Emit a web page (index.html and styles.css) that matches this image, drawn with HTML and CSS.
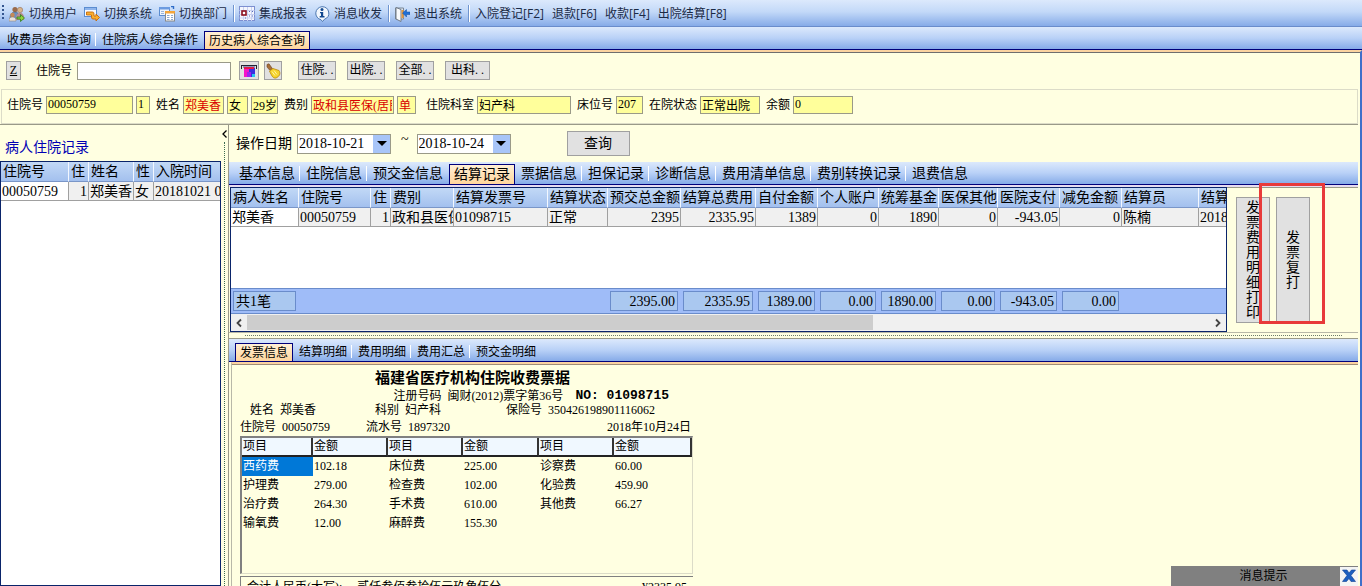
FILE: index.html
```html
<!DOCTYPE html>
<html lang="zh-CN">
<head>
<meta charset="UTF-8">
<meta name="viewport" content="width=device-width, initial-scale=1.0">
<title>历史病人综合查询</title>
<link rel="stylesheet" href="styles.css">
</head>
<body>
<div class="app">

    <!-- 工具栏 -->
    <div class="toolbar">
        <span class="grip"></span>
        <button class="tool">
            <svg viewBox="0 0 16 16"><circle cx="6" cy="3.5" r="2.6" fill="#9a6a4a"/><path d="M1 12c0-4 2-6 5-6s4 2 4 5v2H1z" fill="#6b8fc0" stroke="#456" stroke-width=".5"/><circle cx="11" cy="4" r="2.7" fill="#d8b48c" stroke="#865" stroke-width=".5"/><path d="M7 14c0-5 1-7 4-7s4 2 4 5v2z" fill="#b98b93"/><circle cx="3.5" cy="9" r="2.2" fill="#c58a58"/><path d="M0 15c0-3 1-4 3.500-4S7 12 7 15z" fill="#e9e2dc" stroke="#876" stroke-width=".5"/><path d="M8 11h3.500V8.500l4 3.500-4 3.500V13H8z" fill="#8fd43c" stroke="#2f7d1c" stroke-width=".8"/></svg>
            切换用户
        </button>
        <button class="tool">
            <svg viewBox="0 0 16 16"><rect x=".5" y="1.500" width="12" height="9" fill="#f7fafe" stroke="#5b8cd0"/><path d="M1 2h11v2H1z" fill="#8fb5ec"/><path d="M2.500 6h6c1.500 0 1.500 1 1.500 4h2V8l3.500 3.500L12 15v-2H9c-1.500 0-1.500-1-1.500-4h-5z" fill="#f9ae2e" stroke="#c46a0a" stroke-width=".9"/></svg>
            切换系统
        </button>
        <button class="tool">
            <svg viewBox="0 0 16 16"><rect x=".5" y="1.500" width="10" height="8" fill="#eef4fc" stroke="#5b8cd0"/><path d="M0 1h11v2.500H0z" fill="#6c9be0"/><path d="M2 5.500h3M2 7.500h3" stroke="#9ab4da"/><rect x="6.500" y="5.500" width="9" height="9.500" fill="#fff" stroke="#8a8a8a"/><path d="M6 5h10v2.500H6z" fill="#f4a53a"/><path d="M8 9.500h2.500M12 9.500h2M8 11.500h2.500M12 11.500h2M8 13.500h2.500M12 13.500h2" stroke="#8fa9cf"/><path d="M12 .5h2.500V3" fill="none" stroke="#2f6cc8" stroke-width="1.400"/></svg>
            切换部门
        </button>
        <span class="sep"></span>
        <button class="tool">
            <svg viewBox="0 0 16 16"><rect x=".5" y=".5" width="15" height="14" fill="#f4f6fd" stroke="#7d8fd0"/><path d="M.5 4.500h15M.5 8.500h15M.5 12h15M4.500 1v14M8.500 1v14M12.500 1v14" stroke="#c9d1f0"/><rect x="3" y="5" width="4" height="4" fill="#fff" stroke="#8c1020" stroke-width="1.600"/><path d="M10 5.500h1M13 5.500h1M10 10h1M13 10h1M6 12h1" stroke="#556bb8"/></svg>
            集成报表
        </button>
        <button class="tool">
            <svg viewBox="0 0 16 16"><path d="M8 .7a7 6.500 0 0 1 2.500 12.500L8.500 15.500 7 13.700A6.800 6.600 0 0 1 8 .7z" fill="#f2f7fd" stroke="#4c77b0"/><circle cx="8" cy="3.600" r="1.500" fill="#12488f"/><path d="M6 6h3.200v4h1.300v1.500H5.700V10H7V7.300H6z" fill="#12488f"/></svg>
            消息收发
        </button>
        <span class="sep"></span>
        <button class="tool">
            <svg viewBox="0 0 16 16"><path d="M1.500 2h8v11h-8z" fill="#dfe7f0" stroke="#7b8694"/><path d="M2 1.500l5 2v12l-5-2.500z" fill="#f8fafc" stroke="#6f7a88"/><path d="M7.500 4h2v8h-2z" fill="#e89a3c"/><path d="M8.500 7l4-3.500V6H16v2.500h-3.500V11z" fill="#1f6fd6" stroke="#1450a0" stroke-width=".5"/></svg>
            退出系统
        </button>
        <span class="sep"></span>
        <button class="tool text-only">入院登记[F2]</button>
        <button class="tool text-only">退款[F6]</button>
        <button class="tool text-only">收款[F4]</button>
        <button class="tool text-only">出院结算[F8]</button>
    </div>

    <div class="tabs tabs-main">
        <button class="tab">收费员综合查询</button>
        <button class="tab">住院病人综合操作</button>
        <button class="tab active">历史病人综合查询</button>
    </div>

    <div class="page">
        <!-- 查找病人 -->
        <div class="search">
            <button class="btn btn-z"><u>Z</u></button>
            <label for="findNo">住院号</label>
            <input type="text" id="findNo" class="find-no">
            <button class="btn btn-icon" aria-label="读卡">
                <svg viewBox="0 0 18 16"><path d="M1.500 2v4M16.500 2v4" stroke="#222"/><path d="M3 3h12v2H3z" fill="#8d96b8"/><path d="M1 2.500h16" stroke="#223"/><path d="M4 5h5v9H4z" fill="#f414c8"/><path d="M9 5h6v9H9z" fill="#3a2fe0"/><path d="M4 4h10v2H4z" fill="#e01848"/><path d="M7 9h4v5H7z" fill="#a020f0"/><path d="M12 11h3v3h-3z" fill="#27c4f0"/></svg>
            </button>
            <button class="btn btn-icon btn-clear" aria-label="清空">
                <svg viewBox="0 0 16 16"><path d="M2 1.500L4 .8l3.500 5L5 7.500 2 4z" fill="#a8703a" stroke="#6d4420" stroke-width=".6"/><path d="M4.500 8l3.500-2.500 6 2c2 3 .5 6-3 7.500-3 .5-4-1.500-6.500-7z" fill="#f6d42c" stroke="#b8860b" stroke-width=".8"/><path d="M7 8.500l3 4M9 7.500l3 4" stroke="#fff3a0"/></svg>
            </button>
            <button class="btn btn-find">住院. .</button>
            <button class="btn btn-find">出院. .</button>
            <button class="btn btn-find">全部. .</button>
            <button class="btn btn-find wide">出科. .</button>
        </div>

        <!-- 病人资料 -->
        <div class="patient">
            <label for="pNo">住院号</label>
            <input type="text" id="pNo" class="w-no" value="00050759" readonly>
            <input type="text" class="w-times" value="1" aria-label="住院次数" readonly>
            <label for="pName">姓名</label>
            <input type="text" id="pName" class="w-name red" value="郑美香" readonly>
            <input type="text" class="w-sex" value="女" aria-label="性别" readonly>
            <input type="text" class="w-age" value="29岁" aria-label="年龄" readonly>
            <label for="pType">费别</label>
            <input type="text" id="pType" class="w-type red" value="政和县医保(居民)" readonly>
            <input type="text" class="w-mark red" value="单" aria-label="标记" readonly>
            <label for="pDept" class="l-dept">住院科室</label>
            <input type="text" id="pDept" class="w-dept" value="妇产科" readonly>
            <label for="pBed">床位号</label>
            <input type="text" id="pBed" class="w-age" value="207" readonly>
            <label for="pState">在院状态</label>
            <input type="text" id="pState" class="w-state" value="正常出院" readonly>
            <label for="pLeft">余额</label>
            <input type="text" id="pLeft" class="w-state" value="0" readonly>
        </div>

        <div class="main">
            <div class="left">
                <h2>病人住院记录</h2>
                <div class="left-grid">
                    <table class="grid">
                        <colgroup><col class="c-68"><col class="c-20"><col class="c-45"><col class="c-20"><col class="c-77"></colgroup>
                        <thead>
                            <tr><th>住院号</th><th>住</th><th>姓名</th><th>性</th><th>入院时间</th></tr>
                        </thead>
                        <tbody>
                            <tr><td>00050759</td><td class="num">1</td><td>郑美香</td><td>女</td><td>20181021 08</td></tr>
                        </tbody>
                    </table>
                </div>
            </div>

            <div class="splitter">
                <svg viewBox="0 0 5 8"><path d="M4.500 .5L1 4l3.500 3.500" fill="none" stroke="#000" stroke-width="1.300"/></svg>
                <span class="dots"></span>
            </div>

            <div class="right">
                <div class="filter">
                    <label for="dateFrom">操作日期</label>
                    <span class="date">
                        <input type="text" id="dateFrom" value="2018-10-21">
                        <button aria-label="选择开始日期"></button>
                    </span>
                    <span class="tilde">~</span>
                    <span class="date">
                        <input type="text" value="2018-10-24" aria-label="结束日期">
                        <button aria-label="选择结束日期"></button>
                    </span>
                    <button class="btn btn-query">查询</button>
                </div>

                <div class="tabs tabs-info">
                    <button class="tab">基本信息</button>
                    <button class="tab">住院信息</button>
                    <button class="tab">预交金信息</button>
                    <button class="tab active">结算记录</button>
                    <button class="tab">票据信息</button>
                    <button class="tab">担保记录</button>
                    <button class="tab">诊断信息</button>
                    <button class="tab">费用清单信息</button>
                    <button class="tab">费别转换记录</button>
                    <button class="tab">退费信息</button>
                </div>

                <div class="settle">
                    <div class="settle-grid">
                        <div class="settle-rows">
                            <table class="grid">
                                <colgroup>
                                    <col class="c-68"><col class="c-72"><col class="c-20"><col class="c-63">
                                    <col class="c-94"><col class="c-60"><col class="c-73"><col class="c-75">
                                    <col class="c-62"><col class="c-61"><col class="c-60"><col class="c-59">
                                    <col class="c-62"><col class="c-62"><col class="c-77"><col class="c-94">
                                </colgroup>
                                <thead>
                                    <tr><th>病人姓名</th><th>住院号</th><th>住</th><th>费别</th><th>结算发票号</th><th>结算状态</th><th>预交总金额</th><th>结算总费用</th><th>自付金额</th><th>个人账户</th><th>统筹基金</th><th>医保其他</th><th>医院支付</th><th>减免金额</th><th>结算员</th><th>结算时间</th></tr>
                                </thead>
                                <tbody>
                                    <tr><td>郑美香</td><td>00050759</td><td class="num">1</td><td>政和县医保</td><td>01098715</td><td>正常</td><td class="num">2395</td><td class="num">2335.95</td><td class="num">1389</td><td class="num">0</td><td class="num">1890</td><td class="num">0</td><td class="num">-943.05</td><td class="num">0</td><td>陈楠</td><td>2018-10-24</td></tr>
                                    <tr class="blank"><td colspan="16"></td></tr>
                                </tbody>
                                <tfoot>
                                    <tr><td><span class="left-sum">共1笔</span></td><td colspan="5"></td><td><span>2395.00</span></td><td><span>2335.95</span></td><td><span>1389.00</span></td><td><span>0.00</span></td><td><span>1890.00</span></td><td><span>0.00</span></td><td><span>-943.05</span></td><td><span>0.00</span></td><td colspan="2"></td></tr>
                                </tfoot>
                            </table>
                        </div>
                        <div class="hscroll">
                            <svg viewBox="0 0 8 10"><path d="M6 1.500L2.500 5 6 8.500" fill="none" stroke="#444" stroke-width="1.800"/></svg>
                            <div class="track"><div class="thumb"></div></div>
                            <svg viewBox="0 0 8 10"><path d="M2 1.500L5.500 5 2 8.500" fill="none" stroke="#444" stroke-width="1.800"/></svg>
                        </div>
                    </div>
                    <div class="settle-side">
                        <button class="btn btn-tall"><span>发票费用明细打印</span></button>
                        <button class="btn btn-tall"><span>发票复打</span></button>
                        <div class="mark"></div>
                    </div>
                </div>

                <div class="hsplit"></div>

                <div class="tabs tabs-detail">
                    <button class="tab active">发票信息</button>
                    <button class="tab">结算明细</button>
                    <button class="tab">费用明细</button>
                    <button class="tab">费用汇总</button>
                    <button class="tab">预交金明细</button>
                </div>

                <!-- 发票 -->
                <div class="receipt-box">
                    <div class="receipt">
                        <h3>福建省医疗机构住院收费票据</h3>
                        <div class="line reg"><span>注册号码&nbsp; 闽财(2012)票字第36号</span><b>NO: 01098715</b></div>
                        <div class="line who"><span>姓名&nbsp; 郑美香</span><span>科别&nbsp; 妇产科</span><span>保险号&nbsp; 350426198901116062</span></div>
                        <div class="line nos"><span>住院号&nbsp; 00050759</span><span>流水号&nbsp; 1897320</span><span>2018年10月24日</span></div>
                        <div class="fees-box">
                            <table class="fees">
                                <colgroup><col class="c-71"><col class="c-75"><col class="c-75"><col class="c-76"><col class="c-75"><col></colgroup>
                                <thead>
                                    <tr><th>项目</th><th>金额</th><th>项目</th><th>金额</th><th>项目</th><th>金额</th></tr>
                                </thead>
                                <tbody>
                                    <tr><td class="selected">西药费</td><td>102.18</td><td>床位费</td><td>225.00</td><td>诊察费</td><td>60.00</td></tr>
                                    <tr><td>护理费</td><td>279.00</td><td>检查费</td><td>102.00</td><td>化验费</td><td>459.90</td></tr>
                                    <tr><td>治疗费</td><td>264.30</td><td>手术费</td><td>610.00</td><td>其他费</td><td>66.27</td></tr>
                                    <tr><td>输氧费</td><td>12.00</td><td>麻醉费</td><td>155.30</td><td></td><td></td></tr>
                                </tbody>
                            </table>
                        </div>
                        <div class="total"><span>合计人民币(大写):&nbsp;&nbsp;&nbsp;&nbsp; 贰仟叁佰叁拾伍元玖角伍分</span><span>¥2335.95</span></div>
                    </div>
                </div>
            </div>
        </div>
    </div>

    <!-- 右下角消息 -->
    <div class="message">
        <span>消息提示</span>
        <button aria-label="关闭"><svg viewBox="0 0 16 16"><path d="M1.500 2H6l2 3 2.500-3h4L10 7.500l4.500 6H10l-2-3-2.500 3h-4L6 7.500z" fill="#1d5fc0" stroke="#0d3f90" stroke-width=".6"/></svg></button>
    </div>
</div>
</body>
</html>
```

FILE: styles.css
```css
* {
    box-sizing: border-box;
}

body {
    margin: 0;
    background: #ffffe1;
    color: #000;
    font-family: "Liberation Serif", "Noto Sans CJK SC", serif;
    font-size: 12px;
    line-height: 16px;
}

button, input {
    margin: 0;
    font: inherit;
    color: inherit;
    border-radius: 0;
}

.app {
    height: 100vh;
    display: flex;
    flex-direction: column;
    overflow: hidden;
}

/* 工具栏 */
.toolbar {
    display: flex;
    align-items: center;
    flex: none;
    height: 27px;
    padding-left: 2px;
    background: linear-gradient(#dce9fc, #c3d9f8 45%, #86abe8);
    border-bottom: 1px solid #6a8ccb;
    font-family: "Open Sans", "Noto Sans CJK SC", sans-serif;
    color: #1b2a45;
}

.grip {
    width: 2px;
    height: 16px;
    margin-right: 1px;
    background: repeating-linear-gradient(#34558f 0 2px, transparent 2px 4px);
}

.tool {
    display: flex;
    align-items: center;
    gap: 4px;
    padding: 1px 3px 0 4px;
    border: none;
    background: none;
    white-space: nowrap;
}

.tool.text-only {
    padding-left: 5px;
}

.tool svg {
    width: 16px;
    height: 16px;
}

.sep {
    width: 2px;
    height: 17px;
    margin: 0 0 0 3px;
    border-left: 1px solid #6f94cf;
    border-right: 1px solid #fff;
}

/* 标签页 */
.tabs {
    display: flex;
    align-items: flex-end;
    flex: none;
    background: linear-gradient(#dce9fc, #b9d1f7 50%, #86abe8);
    border-bottom: 1px solid #00007b;
}

.tab {
    position: relative;
    padding: 0 5px;
    border: none;
    border-right: 1px solid transparent;
    background: none;
    white-space: nowrap;
}

/* 两个普通标签之间的分隔线 */
.tab:not(.active):not(:last-child)::after {
    content: "";
    position: absolute;
    top: 2px;
    bottom: 3px;
    right: 0;
    border-left: 1px solid #fff;
}

.tab:has(+ .active)::after {
    display: none;
}

.tab.active {
    padding: 0 4px;
    border: 1px solid #00007b;
    border-bottom: none;
    margin-right: 1px;
    background: linear-gradient(#fff0d6, #ffd59c);
}

.tabs-main {
    height: 23px;
    padding-left: 2px;
}

.tabs-main .tab {
    height: 18px;
    line-height: 19px;
}

.tabs-info {
    height: 23px;
    padding-left: 5px;
    font-size: 14px;
}

.tabs-info .tab {
    height: 20px;
    line-height: 20px;
}

.tabs-detail {
    height: 23px;
    padding-left: 6px;
}

.tabs-detail .tab {
    height: 18px;
    line-height: 19px;
}

/* 主体 */
.page {
    flex: 1;
    min-height: 0;
    display: flex;
    flex-direction: column;
    border-top: 2px solid #fbd3a0;
    border-right: 2px solid #3f6fc9;
    padding-right: 2px;
    box-shadow: inset 0 1px 0 #6e6e6e;
}

.btn {
    padding: 0;
    border: 1px solid #a0a0a0;
    background: #e1e1e1;
    white-space: nowrap;
}

input {
    height: 18px;
    padding: 0 1px;
    border: 1px solid #9a9a88;
    background: #fff;
    outline: none;
}

.search {
    display: flex;
    align-items: center;
    flex: none;
    height: 37px;
    padding-left: 6px;
}

.search .btn {
    height: 19px;
    line-height: 17px;
}

.search .btn-z {
    width: 15px;
    margin-right: 15px;
}

.find-no {
    width: 154px;
    margin: 0 8px 0 5px;
}

.btn-icon {
    display: flex;
    justify-content: center;
    align-items: center;
    width: 20px;
}

.btn-icon svg {
    width: 18px;
    height: 16px;
}

.btn-clear {
    width: 18px;
    margin: 0 16px 0 5px;
}

.btn-clear svg {
    width: 16px;
}

.btn-find {
    width: 38px;
    margin-right: 11px;
}

.btn-find.wide {
    width: 45px;
}

.patient {
    display: flex;
    align-items: center;
    flex: none;
    height: 35px;
    padding: 0 0 4px 5px;
    margin-left: 1px;
    border: 1px solid #dcdcc8;
}

.patient label {
    margin-right: 3px;
    white-space: nowrap;
}

.patient input {
    flex: none;
    margin-right: 3px;
    background: #ffff9b;
}

.patient input + label {
    margin-left: 3px;
}

.patient input + .l-dept {
    margin-left: 7px;
}

.patient .red {
    color: #d80000;
}

.w-no { width: 87px; }
.w-times { width: 14px; }
.w-name { width: 41px; }
.w-sex { width: 21px; }
.w-age { width: 27px; }
.w-type { width: 83px; }
.w-mark { width: 19px; }
.w-dept { width: 94px; }
.w-state { width: 60px; }

.main {
    flex: 1;
    min-height: 0;
    display: flex;
    border-top: 1px solid #9a9a88;
    font-size: 14px;
}

/* 左侧病人列表 */
.left {
    flex: none;
    width: 221px;
    display: flex;
    flex-direction: column;
}

.left h2 {
    margin: 0;
    padding: 9px 0 0 5px;
    height: 36px;
    font-size: 14px;
    font-weight: normal;
    line-height: 28px;
    color: #0000b4;
}

.left-grid {
    flex: 1;
    overflow: hidden;
    border: 1px solid #0a246a;
    background: #fff;
}

.grid {
    width: 0;
    table-layout: fixed;
    border-collapse: separate;
    border-spacing: 0;
}

.grid th, .grid td {
    padding: 1px 2px 0;
    height: 19px;
    line-height: 17px;
    overflow: hidden;
    white-space: nowrap;
}

.grid th {
    height: 20px;
    line-height: 18px;
    font-weight: normal;
    text-align: left;
    background: linear-gradient(#c2d9f6, #a3c0ee);
    border-right: 1px solid #f2f7ff;
    border-bottom: 1px solid #7a96c8;
}

.grid td {
    padding: 1px 1px 0;
    background: #f0f0f0;
    border-right: 1px solid #a0a0a0;
    border-bottom: 1px solid #a0a0a0;
}

.grid tbody td:first-child {
    background: #fff;
}

.grid .num {
    text-align: right;
}

.c-20 { width: 20px; }
.c-45 { width: 45px; }
.c-59 { width: 59px; }
.c-60 { width: 60px; }
.c-61 { width: 61px; }
.c-62 { width: 62px; }
.c-63 { width: 63px; }
.c-68 { width: 68px; }
.c-71 { width: 71px; }
.c-72 { width: 72px; }
.c-73 { width: 73px; }
.c-75 { width: 75px; }
.c-76 { width: 76px; }
.c-77 { width: 77px; }
.c-94 { width: 94px; }

.splitter {
    flex: none;
    width: 8px;
    display: flex;
    flex-direction: column;
    align-items: center;
    padding-top: 5px;
    border-right: 1px solid #9a9a88;
}

.splitter svg {
    flex: none;
    width: 5px;
    height: 8px;
}

.dots {
    flex: 1;
    margin-top: 4px;
    border-left: 1px dotted #3c6b50;
}

/* 右侧 */
.right {
    flex: 1;
    min-width: 0;
    display: flex;
    flex-direction: column;
}

.filter {
    display: flex;
    align-items: center;
    flex: none;
    height: 37px;
    padding-left: 7px;
}

.date {
    display: flex;
    width: 94px;
    height: 20px;
    margin-left: 5px;
    border: 1px solid #9a9a88;
    background: #fff;
}

.date input {
    flex: 1;
    min-width: 0;
    border: none;
}

.date button {
    width: 17px;
    padding: 0;
    border: none;
    background: #a8c5f8;
}

.date button::before {
    content: "";
    display: block;
    margin: 0 auto;
    width: 0;
    border: 5px solid transparent;
    border-top-color: #000;
    border-bottom: none;
}

.tilde {
    margin: 0 3px 8px 10px;
}

.btn-query {
    width: 63px;
    height: 25px;
    margin-left: 56px;
}

.settle {
    display: flex;
    flex: none;
    border-top: 2px solid #e8dcf0;
}

.settle-grid {
    flex: 1;
    min-width: 0;
    margin-left: 1px;
    border: 1px solid #0a246a;
    background: #fff;
}

.settle-rows {
    overflow: hidden;
}

.grid .blank td {
    height: 61px;
    border: none;
}

.grid tfoot td {
    height: 26px;
    padding: 0 3px 0 2px;
    background: #9fbcf8;
    border: none;
    border-top: 1px solid #6a8ccb;
    border-bottom: 1px solid #6a8ccb;
    overflow: visible;
}

.grid tfoot span {
    display: block;
    height: 20px;
    padding: 1px 2px 0;
    border: 1px solid #6a8ccb;
    background: #aac8f0;
    text-align: right;
}

.grid tfoot .left-sum {
    text-align: left;
}

.hscroll {
    display: flex;
    align-items: center;
    height: 17px;
    background: #f0f0f0;
}

.hscroll svg {
    width: 8px;
    height: 10px;
    margin: 0 4px;
}

.track {
    flex: 1;
    height: 15px;
}

.thumb {
    width: 65%;
    height: 100%;
    background: #cdcdcd;
}

.settle-side {
    position: relative;
    flex: none;
    display: flex;
    gap: 6px;
    width: 131px;
    padding: 9px 0 0 9px;
    border-top: 1px solid #9a9a88;
}

.btn-tall {
    width: 34px;
    height: 126px;
    font-size: 14px;
    line-height: 15px;
}

.btn-tall span {
    display: block;
    width: 14px;
    margin-left: 9px;
    white-space: normal;
}

/* 红框标出发票复打 */
.mark {
    position: absolute;
    top: -5px;
    left: 32px;
    width: 66px;
    height: 141px;
    border: 3px solid #e83a3a;
}

.hsplit {
    flex: none;
    height: 7px;
    padding: 0 16px;
    border-top: 1px solid #b8b8a8;
    border-bottom: 1px solid #9a9a88;
}

.hsplit::before {
    content: "";
    display: block;
    margin-top: 2px;
    border-top: 1px dotted #6b7b6b;
}

.tabs-detail, .receipt-box {
    font-size: 12px;
}

.receipt-box {
    flex: 1;
    min-height: 0;
    overflow: hidden;
    margin-left: 2px;
    border-top: 2px solid #fbd3a0;
    border-left: 1px solid #b8b8a8;
    box-shadow: inset 0 1px 0 #a08c78;
}

.receipt {
    width: 453px;
    margin-left: 8px;
    padding-top: 4px;
}

.receipt h3 {
    margin: 0 0 0 135px;
    font-size: 15px;
    line-height: 20px;
}

.line {
    display: flex;
    height: 14px;
    line-height: 16px;
    white-space: nowrap;
}

.reg {
    justify-content: flex-end;
    gap: 12px;
    padding-right: 24px;
}

.reg b {
    font-family: "Liberation Mono", monospace;
    font-size: 13px;
}

.who {
    display: grid;
    grid-template-columns: 125px 131px auto;
    padding-left: 10px;
}

.nos {
    display: grid;
    grid-template-columns: 126px 1fr auto;
    height: 20px;
    padding-right: 2px;
    line-height: 22px;
}

.fees-box {
    height: 138px;
    border: 1px solid #dcdcc8;
    border-top: 2px solid #808080;
    border-left: 2px solid #808080;
}

.fees {
    width: 100%;
    table-layout: fixed;
    border-collapse: separate;
    border-spacing: 0;
}

.fees th, .fees td {
    height: 19px;
    padding: 0 1px;
    line-height: 17px;
    text-align: left;
}

.fees th {
    font-weight: normal;
    background: #f0f8ff;
    border-right: 2px solid #333;
    border-bottom: 2px solid #222;
}

.fees .selected {
    color: #fff;
    background: #0078d7;
}

.total {
    display: flex;
    justify-content: space-between;
    margin-top: 2px;
    padding: 2px 6px;
    border-top: 1px solid #808080;
    border-left: 1px solid #808080;
    line-height: 16px;
}

/* 消息提示 */
.message {
    position: fixed;
    right: 4px;
    bottom: 0;
    display: flex;
    align-items: center;
    width: 187px;
    height: 20px;
    background: #808080;
}

.message span {
    flex: 1;
    padding-left: 16px;
    text-align: center;
}

.message button {
    width: 18px;
    height: 19px;
    padding: 1px;
    border: none;
    background: #f4f4f4;
}

.message svg {
    display: block;
    width: 16px;
    height: 16px;
}
```
